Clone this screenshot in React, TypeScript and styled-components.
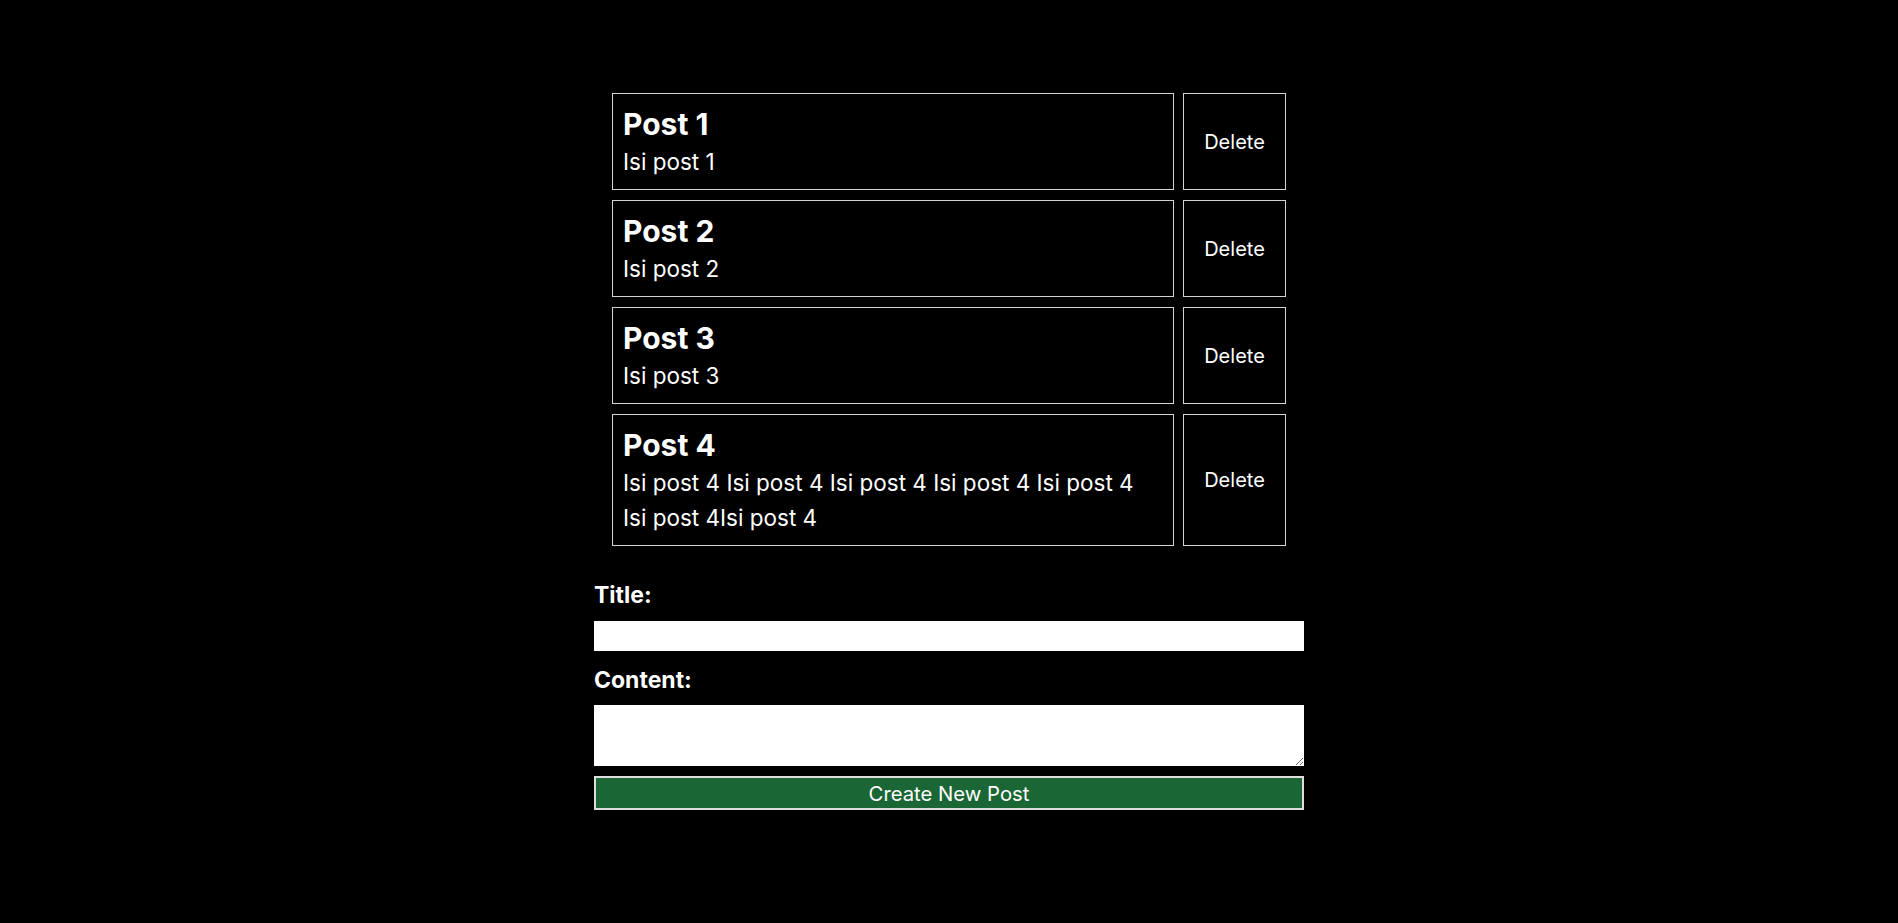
import { useState } from 'react';
import styled, { createGlobalStyle } from 'styled-components';

type Post = {
  id: number;
  title: string;
  content: string;
};

const initialPosts: Post[] = [
  { id: 1, title: 'Post 1', content: 'Isi post 1' },
  { id: 2, title: 'Post 2', content: 'Isi post 2' },
  { id: 3, title: 'Post 3', content: 'Isi post 3' },
  {
    id: 4,
    title: 'Post 4',
    content: 'Isi post 4 Isi post 4 Isi post 4 Isi post 4 Isi post 4 Isi post 4Isi post 4',
  },
];

const App = () => {
  const [posts, setPosts] = useState<Post[]>(initialPosts);
  const [newPost, setNewPost] = useState({ title: '', content: '' });

  const deletePost = (id: number) => {
    setPosts(posts.filter((post) => post.id !== id));
  };

  const createPost = (e: React.FormEvent) => {
    e.preventDefault();
    if (!newPost.title) return;
    setPosts([...posts, { id: Date.now(), ...newPost }]);
    setNewPost({ title: '', content: '' });
  };

  return (
    <>
      <GlobalStyle />
      <Wrapper>
        <PostList>
          {posts.map((post) => (
            <PostRow key={post.id}>
              <PostCard>
                <PostTitle>{post.title}</PostTitle>
                <PostContent>{post.content}</PostContent>
              </PostCard>
              <DeleteBtn onClick={() => deletePost(post.id)}>Delete</DeleteBtn>
            </PostRow>
          ))}
        </PostList>
        <PostForm onSubmit={createPost}>
          <FormLabel htmlFor='title'>Title:</FormLabel>
          <TitleInput
            id='title'
            type='text'
            value={newPost.title}
            onChange={(e) => setNewPost({ ...newPost, title: e.target.value })}
          />
          <FormLabel htmlFor='content'>Content:</FormLabel>
          <ContentInput
            id='content'
            value={newPost.content}
            onChange={(e) => setNewPost({ ...newPost, content: e.target.value })}
          />
          <CreateBtn type='submit'>Create New Post</CreateBtn>
        </PostForm>
      </Wrapper>
    </>
  );
};

export default App;

const GlobalStyle = createGlobalStyle`
  body {
    margin: 0;
    background-color: #000000;
    color: #ffffff;
    font-family: Inter, "Noto Sans", sans-serif;
    line-height: 1.5;
  }
`;

const Wrapper = styled.div`
  width: 710px;
  margin: 0 auto;
  padding-top: 93px;
`;

const PostList = styled.div`
  width: 674px;
  margin: 0 auto 30px;
  display: flex;
  flex-direction: column;
  gap: 10px;
`;

const PostRow = styled.div`
  display: flex;
  gap: 9px;
`;

const PostCard = styled.div`
  flex: 1;
  border: 1px solid #d4d4d4;
  padding: 11px 12px 10px 10px;
`;

const PostTitle = styled.h2`
  margin: 0;
  font-size: 30px;
  line-height: 39px;
  font-weight: 700;
`;

const PostContent = styled.p`
  margin: 0;
  font-size: 22.5px;
  line-height: 35px;
`;

const DeleteBtn = styled.button`
  width: 103px;
  background-color: #000000;
  color: #ffffff;
  border: 1px solid #d4d4d4;
  font-family: Inter, "Noto Sans", sans-serif;
  font-size: 20px;
  cursor: pointer;
`;

const PostForm = styled.form`
  display: flex;
  flex-direction: column;
  gap: 10px;
`;

const FormLabel = styled.label`
  padding-top: 4px;
  font-size: 23px;
  line-height: 30.5px;
  font-weight: 700;
`;

const TitleInput = styled.input`
  height: 30px;
  box-sizing: border-box;
  border: none;
  outline: none;
  background-color: #ffffff;
  padding: 0 6px;
  font-size: 18px;
`;

const ContentInput = styled.textarea`
  height: 61px;
  box-sizing: border-box;
  border: none;
  outline: none;
  background-color: #ffffff;
  padding: 4px 6px;
  font-size: 18px;
  margin: 0;
`;

const CreateBtn = styled.button`
  height: 34px;
  padding: 0;
  background-color: #1a6634;
  color: #ffffff;
  border: 2px solid #dedede;
  font-family: Inter, "Noto Sans", sans-serif;
  font-size: 20.3px;
  cursor: pointer;
`;
